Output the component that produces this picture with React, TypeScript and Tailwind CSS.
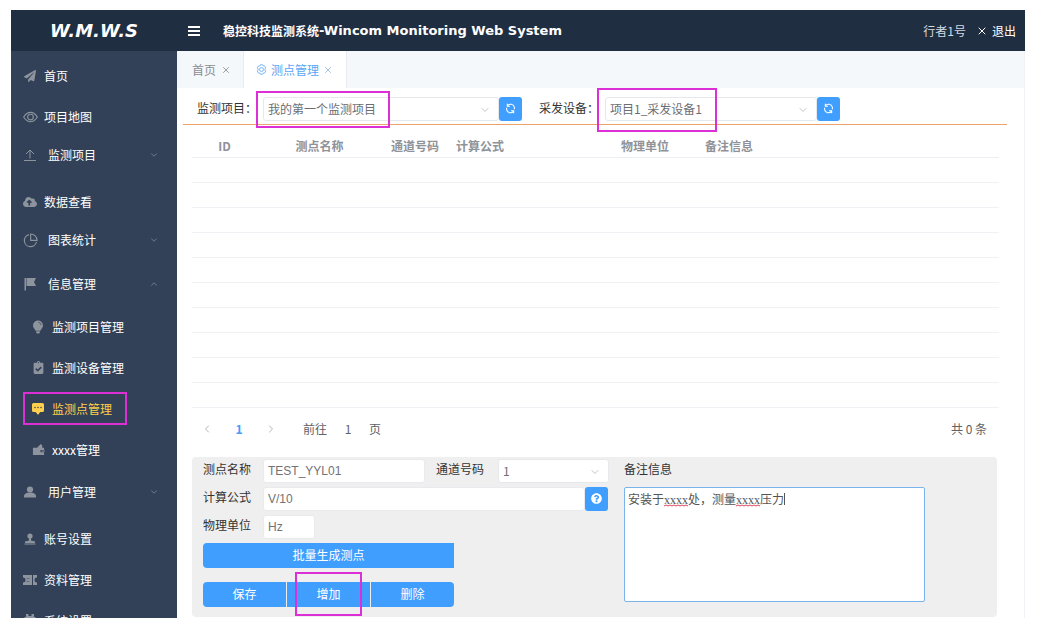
import { useState } from 'react'
import type { ReactNode } from 'react'
import { BsChatSquareDotsFill } from 'react-icons/bs'
import { FaClipboardCheck, FaCloudUploadAlt, FaPaperPlane, FaQuestionCircle } from 'react-icons/fa'
import { ChevronDown, ChevronLeft, ChevronRight, ChevronUp, X } from 'lucide-react'

type NavEntry = {
  label: string
  icon: ReactNode
  group?: boolean
  children?: NavEntry[]
}

function EyeIcon() {
  return (
    <svg viewBox="0 0 16 12" className="h-[12px] w-[15px] shrink-0" fill="none" stroke="currentColor" strokeWidth="1.2">
      <path d="M0.700 6C2.800 2.600 5.200 1 8 1s5.200 1.600 7.300 5C13.200 9.400 10.800 11 8 11S2.800 9.400 0.700 6Z" />
      <circle cx="8" cy="6" r="3" />
    </svg>
  )
}

function UploadIcon() {
  return (
    <svg viewBox="0 0 14 14" className="h-[14px] w-[14px]" fill="none" stroke="currentColor">
      <path d="M7 10.500V2M3 6l4-4 4 4M1 12.500h12" />
    </svg>
  )
}

function PieIcon() {
  return (
    <svg viewBox="0 0 16 16" className="h-[15px] w-[15px] shrink-0" fill="none" stroke="currentColor" strokeWidth="1.2">
      <path d="M6.500 1.700A6.500 6.500 0 1 0 14.300 9.500" />
      <path d="M8.200 1a6.800 6.800 0 0 1 6.800 6.800H8.200Z" />
    </svg>
  )
}

function FlagIcon() {
  return (
    <svg viewBox="0 0 12 14" className="h-[14px] w-[12px]" fill="currentColor">
      <path d="M0.500 1H2v12.500H.5Z" />
      <path d="M2.500 1H12L10 5l2 4H2.500Z" />
    </svg>
  )
}

function BulbIcon() {
  return (
    <svg viewBox="0 0 14 14" className="h-[14px] w-[14px]" fill="currentColor">
      <path d="M7 0.500a5 5 0 0 0-5 5c0 2.200 1.700 3.300 2.700 5.200h4.600c1-1.900 2.700-3 2.700-5.200a5 5 0 0 0-5-5Z" />
      <path d="M5.200 11.300h3.600v1.200l-.8 1H6l-.8-1Z" />
      <path d="M7.300 2.300c1.500.200 2.500 1.200 2.700 2.700" fill="none" stroke="#324157" strokeWidth="0.700" />
    </svg>
  )
}

function WalletIcon() {
  return (
    <svg viewBox="0 0 14 14" className="h-[13px] w-[13px]" fill="currentColor">
      <path d="M1 5h4.500L7 3.500 9.500 1 11 2.500V5h2v2.500h-3a1.200 1.200 0 0 0 0 2.400h3V13H1Z" />
      <path d="M10.200 8.200H14v1h-3.800z" />
    </svg>
  )
}

function PersonIcon() {
  return (
    <svg viewBox="0 0 12 12" className="h-[12px] w-[12px]" fill="currentColor">
      <circle cx="6" cy="3.500" r="3.100" />
      <path d="M3.500 6.800h5C10.500 7.300 12 8.500 12 10v1.500H0V10c0-1.500 1.500-2.700 3.500-3.200Z" />
    </svg>
  )
}

function AccountIcon() {
  return (
    <svg viewBox="0 0 12 12" className="h-[12px] w-[12px]" fill="currentColor">
      <circle cx="6" cy="3" r="2.600" />
      <path d="M5 5h2v2.500l4 1v1.500H1V8.500l4-1Z" />
      <path d="M0.500 10.500h11v1H.5Z" />
    </svg>
  )
}

function TicketIcon() {
  return (
    <svg viewBox="0 0 14 12" className="h-[12px] w-[14px]" fill="currentColor">
      <path d="M0 1h9v10H0V8.500a2.500 2.500 0 0 0 0-5Z" />
      <path d="M10 1h4v2.500a2.500 2.500 0 0 0 0 5V11h-4Z" />
      <path d="M3.500 4.500h3M3.500 7.500h3" stroke="#324157" strokeWidth="0.500" />
    </svg>
  )
}

function SuitIcon() {
  return (
    <svg viewBox="0 0 14 14" className="h-[14px] w-[14px]" fill="currentColor">
      <path d="M3 0h2.500v2h3V0H11v3h1.500v9h-11V3H3Z" />
    </svg>
  )
}

function GearIcon() {
  return (
    <svg viewBox="0 0 14 14" className="h-[11px] w-[11px]" fill="none" stroke="currentColor">
      <path d="M5.500 1h3l.6 1.500 1.700-.1 1.500 2.600-1 1.300v1.400l1 1.300-1.500 2.600-1.700-.1L8.500 13h-3l-.6-1.500-1.700.1L1.700 9l1-1.300V6.300L1.700 5l1.500-2.600 1.700.1Z" />
      <circle cx="7" cy="7" r="2.500" />
    </svg>
  )
}

function RefreshIcon() {
  return (
    <svg viewBox="0 0 14 14" className="h-[11px] w-[11px]" fill="none" stroke="currentColor" strokeWidth="1.400">
      <path d="M2 8.500A5 5 0 0 0 11 10.300M12 5.500A5 5 0 0 0 3 3.700" />
      <path d="M3 0.800v3.400h3.300M11 13.200V9.800H7.700" />
      <path d="M2 8.500V6.200M12 5.500v2.300" />
    </svg>
  )
}

const NAV: NavEntry[] = [
  { label: '首页', icon: <FaPaperPlane size={12} /> },
  { label: '项目地图', icon: <EyeIcon /> },
  { label: '监测项目', icon: <UploadIcon />, group: true },
  { label: '数据查看', icon: <FaCloudUploadAlt size={14} /> },
  { label: '图表统计', icon: <PieIcon />, group: true },
  {
    label: '信息管理',
    icon: <FlagIcon />,
    group: true,
    children: [
      { label: '监测项目管理', icon: <BulbIcon /> },
      { label: '监测设备管理', icon: <FaClipboardCheck size={13} /> },
      { label: '监测点管理', icon: <BsChatSquareDotsFill size={12} /> },
      { label: 'xxxx管理', icon: <WalletIcon /> },
    ],
  },
  { label: '用户管理', icon: <PersonIcon />, group: true },
  { label: '账号设置', icon: <AccountIcon /> },
  { label: '资料管理', icon: <TicketIcon /> },
  { label: '系统设置', icon: <SuitIcon /> },
]

const COLUMNS = [
  { label: 'ID', className: 'w-[65px] text-center' },
  { label: '测点名称', className: 'w-[125px] text-center' },
  { label: '通道号码', className: 'w-[66px] text-center' },
  { label: '计算公式', className: 'w-[159px] pl-2 text-left' },
  { label: '物理单位', className: 'w-[76px] text-center' },
  { label: '备注信息', className: 'pl-[22px] text-left' },
]

function Mark({ className }: { className: string }) {
  return <span aria-hidden="true" className={`pointer-events-none absolute z-10 border-2 border-[#dc30d6] ${className}`} />
}

function NavRow({ entry, active, onSelect }: { entry: NavEntry; active: string; onSelect: (label: string) => void }) {
  const selected = entry.label === active
  return (
    <button
      type="button"
      onClick={() => onSelect(entry.label)}
      className={`flex w-full items-center pl-3 pr-[18px] text-left ${entry.group ? 'h-[34px] gap-[11px]' : 'h-[41px] gap-[7px]'} ${
        selected ? 'text-[#ffd04b]' : 'text-white'
      }`}
    >
      <span className={`flex w-[14px] shrink-0 justify-center ${selected ? '' : 'text-[#8d949e]'}`}>{entry.icon}</span>
      <span className="flex-1">{entry.label}</span>
      {entry.group &&
        (entry.children ? (
          <ChevronUp size={10} className="text-[#7b8797]" />
        ) : (
          <ChevronDown size={10} className="text-[#7b8797]" />
        ))}
    </button>
  )
}

function itemSpacing(entry: NavEntry) {
  if (entry.children) return 'mb-1 pt-px'
  return entry.group ? 'mb-[9px] pt-px' : ''
}

function Sidebar() {
  const [active, setActive] = useState('监测点管理')
  return (
    <nav className="w-[166px] shrink-0 overflow-hidden bg-[#324157] pt-1">
      <ul>
        {NAV.map((entry) => (
          <li key={entry.label} className={itemSpacing(entry)}>
            <NavRow entry={entry} active={active} onSelect={setActive} />
            {entry.children && (
              <ul className="pl-2 pt-[5px]">
                {entry.children.map((child) => (
                  <li key={child.label} className="relative">
                    <NavRow entry={child} active={active} onSelect={setActive} />
                    {child.label === '监测点管理' && <Mark className="bottom-1 left-1 right-[50px] top-1" />}
                  </li>
                ))}
              </ul>
            )}
          </li>
        ))}
      </ul>
    </nav>
  )
}

function Select({ id, value, className, mark }: { id: string; value: string; className: string; mark?: string }) {
  return (
    <div className={`relative ${className}`}>
      <select
        id={id}
        defaultValue={value}
        className="h-6 w-full appearance-none rounded-[3px] border border-[#e6e8ec] bg-white pl-1 text-[#6c6e73] outline-none"
      >
        <option>{value}</option>
      </select>
      <ChevronDown size={12} className="pointer-events-none absolute right-2 top-[7px] text-[#c0c4cc]" />
      {mark && <Mark className={mark} />}
    </div>
  )
}

function SquareButton({ label, children }: { label: string; children: ReactNode }) {
  return (
    <button
      type="button"
      aria-label={label}
      className="flex h-6 w-[23px] shrink-0 items-center justify-center rounded-[3px] bg-[#409eff] text-white"
    >
      {children}
    </button>
  )
}

function Tabs() {
  return (
    <div className="flex h-[37px] border-l-4 border-[#f3f7fc] bg-[#f5f8fb] text-[#8a8c90]">
      <div className="flex w-[63px] items-center gap-[5px] border-r border-[#e8ebf0] pl-[11px]">
        <button type="button">首页</button>
        <button type="button" aria-label="关闭首页">
          <X size={10} />
        </button>
      </div>
      <div className="flex w-[103px] items-center border-r border-[#e8ebf0] bg-white pl-3 text-[#5ba6f5]">
        <GearIcon />
        <button type="button" className="ml-1">测点管理</button>
        <button type="button" aria-label="关闭测点管理" className="ml-1 text-[#8fb8e2]">
          <X size={10} />
        </button>
      </div>
    </div>
  )
}

function Toolbar() {
  return (
    <div className="ml-[6px] mr-[17px] flex h-[37px] items-center border-b border-[#eda26c] pl-[14px] pt-2 pb-[3px]">
      <label htmlFor="project" className="w-[66px] shrink-0 whitespace-nowrap pb-[2px] text-[#333]">监测项目：</label>
      <Select id="project" value="我的第一个监测项目" className="w-[236px]" mark="-left-[7px] -top-[6px] h-[37px] w-[134px]" />
      <SquareButton label="刷新监测项目">
        <RefreshIcon />
      </SquareButton>
      <label htmlFor="device" className="ml-[17px] w-[66px] shrink-0 whitespace-nowrap pb-[2px] text-[#333]">采发设备：</label>
      <Select id="device" value="项目1_采发设备1" className="w-[212px]" mark="-left-2 -top-[9px] h-11 w-[120px]" />
      <SquareButton label="刷新采发设备">
        <RefreshIcon />
      </SquareButton>
    </div>
  )
}

function PointTable() {
  return (
    <table className="w-full table-fixed border-collapse">
      <thead>
        <tr className="h-[25px] border-b border-[#ebeef2] text-[#8f9298]">
          {COLUMNS.map((column) => (
            <th key={column.label} className={`p-0 pt-[3px] font-bold ${column.className}`}>
              {column.label}
            </th>
          ))}
        </tr>
      </thead>
      <tbody>
        {Array.from({ length: 10 }, (_, row) => (
          <tr key={row} className="h-[25px] border-b border-[#f0f1f4]">
            <td colSpan={COLUMNS.length} className="p-0" />
          </tr>
        ))}
      </tbody>
    </table>
  )
}

function Pager() {
  return (
    <div className="flex h-[42px] items-center pl-[9px] pr-3 text-[#606266]">
      <button type="button" aria-label="上一页" className="w-3 text-[#b0b3b8]">
        <ChevronLeft size={12} />
      </button>
      <button type="button" className="w-[52px] text-center font-bold text-[#409eff]">1</button>
      <button type="button" aria-label="下一页" className="w-3 text-[#b0b3b8]">
        <ChevronRight size={12} />
      </button>
      <label htmlFor="page" className="ml-[26px]">前往</label>
      <input id="page" defaultValue="1" className="w-[42px] text-center outline-none" />
      <span>页</span>
      <span className="ml-auto">共 0 条</span>
    </div>
  )
}

const INPUT = 'h-6 rounded-[3px] border border-[#e8eaed] bg-white pl-1 font-["Liberation_Sans",sans-serif] text-[#707276] outline-none'
const LABEL = 'shrink-0 whitespace-nowrap pb-1 text-[#333]'

// Red wave under the words that the spell checker flags
function Squiggle({ className }: { className: string }) {
  return (
    <svg viewBox="0 0 24 3" className={`pointer-events-none absolute h-[3px] w-6 ${className}`} fill="none" stroke="#e0455a">
      <path d="M0 2l2-1 2 1 2-1 2 1 2-1 2 1 2-1 2 1 2-1 2 1 2-1 2 1" />
    </svg>
  )
}

function PointForm() {
  return (
    <form className="flex rounded bg-[#efefef] pb-[10px] pl-[11px] pt-[2px]" onSubmit={(e) => e.preventDefault()}>
      <div className="w-[406px] shrink-0">
        <div className="flex flex-col gap-1">
          <div className="flex items-center">
            <label htmlFor="name" className={`${LABEL} w-[60px]`}>测点名称</label>
            <input id="name" defaultValue="TEST_YYL01" className={`${INPUT} w-[162px]`} />
            <label htmlFor="channel" className={`${LABEL} ml-[11px] w-[62px]`}>通道号码</label>
            <Select id="channel" value="1" className="w-[111px]" />
          </div>
          <div className="flex items-center">
            <label htmlFor="formula" className={`${LABEL} w-[60px]`}>计算公式</label>
            <input id="formula" defaultValue="V/10" className={`${INPUT} w-[322px]`} />
            <SquareButton label="公式帮助">
              <FaQuestionCircle size={11} />
            </SquareButton>
          </div>
          <div className="flex items-center">
            <label htmlFor="unit" className={`${LABEL} w-[60px]`}>物理单位</label>
            <input id="unit" defaultValue="Hz" className={`${INPUT} w-[52px]`} />
          </div>
        </div>
        <button type="button" className="mt-1 h-[25px] w-[251px] rounded-l bg-[#409eff] text-white">批量生成测点</button>
        <div className="mt-[14px] flex h-[25px] w-[251px] gap-px text-white">
          <button type="submit" className="flex-1 rounded-l bg-[#409eff]">保存</button>
          <div className="relative flex flex-1">
            <button type="button" className="flex-1 bg-[#409eff]">增加</button>
            <Mark className="-bottom-[9px] -top-[10px] left-2 right-2" />
          </div>
          <button type="button" className="flex-1 rounded-r bg-[#409eff]">删除</button>
        </div>
      </div>
      <div className="ml-[15px] flex w-[301px] flex-col">
        <label htmlFor="remark" className={`${LABEL} h-7 pt-px`}>备注信息</label>
        <div className="relative">
          <textarea
            id="remark"
            defaultValue="安装于xxxx处，测量xxxx压力"
            className='block h-[115px] w-full resize-none rounded-[2px] border border-[#79b4ec] bg-white px-[3px] py-[3px] font-["Liberation_Serif","Noto_Sans_CJK_SC",serif] text-[#555] outline-none'
          />
          <Squiggle className="left-10 top-[17px]" />
          <Squiggle className="left-28 top-[17px]" />
          <span className="pointer-events-none absolute left-40 top-[6px] h-3 w-px bg-[#555]" />
        </div>
      </div>
    </form>
  )
}

export default function App() {
  return (
    <div className='flex h-screen flex-col overflow-hidden bg-white pb-2 pl-[11px] pr-[13px] pt-[10px] font-["Noto_Sans_CJK_SC",sans-serif] text-[12px] leading-[18px]'>
      <header className="flex h-[41px] shrink-0 items-center bg-[#202e42] pr-[9px] text-white">
        <div className='w-[166px] text-center font-["DejaVu_Sans",sans-serif] text-[18px] font-bold italic'>W.M.W.S</div>
        <button type="button" aria-label="折叠菜单" className="ml-[11px] flex w-3 flex-col gap-[2px]">
          <span className="h-[2px] bg-white" />
          <span className="h-[2px] bg-white" />
          <span className="h-[2px] bg-white" />
        </button>
        <h1 className="ml-[23px] flex items-center font-bold">
          稳控科技监测系统
          <span className='font-["DejaVu_Sans",sans-serif] text-[13px]'>-Wincom Monitoring Web System</span>
        </h1>
        <span className="ml-auto text-[#d5dae1]">行者1号</span>
        <button type="button" className="ml-[10px] flex items-center gap-1">
          <X size={12} />
          退出
        </button>
      </header>
      <div className="flex min-h-0 flex-1">
        <Sidebar />
        <main className="min-w-0 flex-1 border-r border-[#f0f2f5]">
          <Tabs />
          <Toolbar />
          <div className="ml-[15px] mr-[25px] pt-[7px]">
            <PointTable />
            <Pager />
          </div>
          <div className="ml-[15px] mr-[27px] pt-[7px]">
            <PointForm />
          </div>
        </main>
      </div>
    </div>
  )
}
